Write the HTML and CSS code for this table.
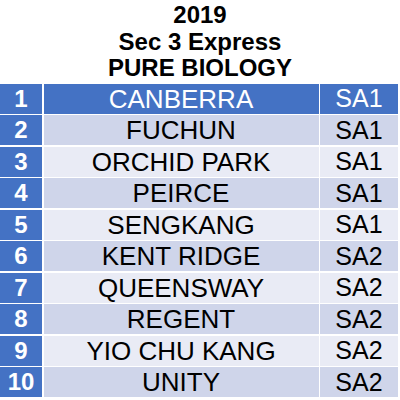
FILE: index.html
```html
<!DOCTYPE html>
<html>
<head>
<meta charset="utf-8">
<link rel="stylesheet" href="styles.css">
</head>
<body>
<div class="page">
  <div class="title">
    <div class="line">2019</div>
    <div class="line">Sec 3 Express</div>
    <div class="line">PURE BIOLOGY</div>
  </div>
  <div class="table">
    <div class="row head"><div class="num">1</div><div class="name">CANBERRA</div><div class="sa">SA1</div></div>
    <div class="row dark"><div class="num">2</div><div class="name">FUCHUN</div><div class="sa">SA1</div></div>
    <div class="row light"><div class="num">3</div><div class="name">ORCHID PARK</div><div class="sa">SA1</div></div>
    <div class="row dark"><div class="num">4</div><div class="name">PEIRCE</div><div class="sa">SA1</div></div>
    <div class="row light"><div class="num">5</div><div class="name">SENGKANG</div><div class="sa">SA1</div></div>
    <div class="row dark"><div class="num">6</div><div class="name">KENT RIDGE</div><div class="sa">SA2</div></div>
    <div class="row light"><div class="num">7</div><div class="name">QUEENSWAY</div><div class="sa">SA2</div></div>
    <div class="row dark"><div class="num">8</div><div class="name">REGENT</div><div class="sa">SA2</div></div>
    <div class="row light"><div class="num">9</div><div class="name">YIO CHU KANG</div><div class="sa">SA2</div></div>
    <div class="row dark"><div class="num">10</div><div class="name">UNITY</div><div class="sa">SA2</div></div>
  </div>
</div>
</body>
</html>
```

FILE: styles.css
```css
html, body {
  margin: 0;
  padding: 0;
  background: #ffffff;
}
.page {
  width: 400px;
  height: 400px;
  overflow: hidden;
  font-family: "Liberation Sans", Arial, sans-serif;
}
.title {
  padding-top: 2px;
  display: flex;
  flex-direction: column;
  align-items: center;
  font-weight: bold;
  font-size: 24px;
  color: #000;
}
.title .line {
  height: 26.5px;
  line-height: 26.5px;
}
.table {
  margin-top: 2px;
  width: 398px;
  display: flex;
  flex-direction: column;
  gap: 1.5px;
}
.row {
  display: grid;
  grid-template-columns: 42px 1fr 78px;
  column-gap: 1.5px;
  height: 30px;
}
.row > div {
  display: flex;
  align-items: center;
  justify-content: center;
  line-height: 1;
}
.num {
  background: #4472c4;
  color: #fff;
  font-weight: bold;
  font-size: 24px;
}
.name {
  font-size: 26px;
}
.sa {
  font-size: 25px;
}
.head .name, .head .sa {
  background: #4472c4;
  color: #fff;
}
.dark .name, .dark .sa {
  background: #cfd5ea;
  color: #000;
}
.light .name, .light .sa {
  background: #e9ebf5;
  color: #000;
}
```
